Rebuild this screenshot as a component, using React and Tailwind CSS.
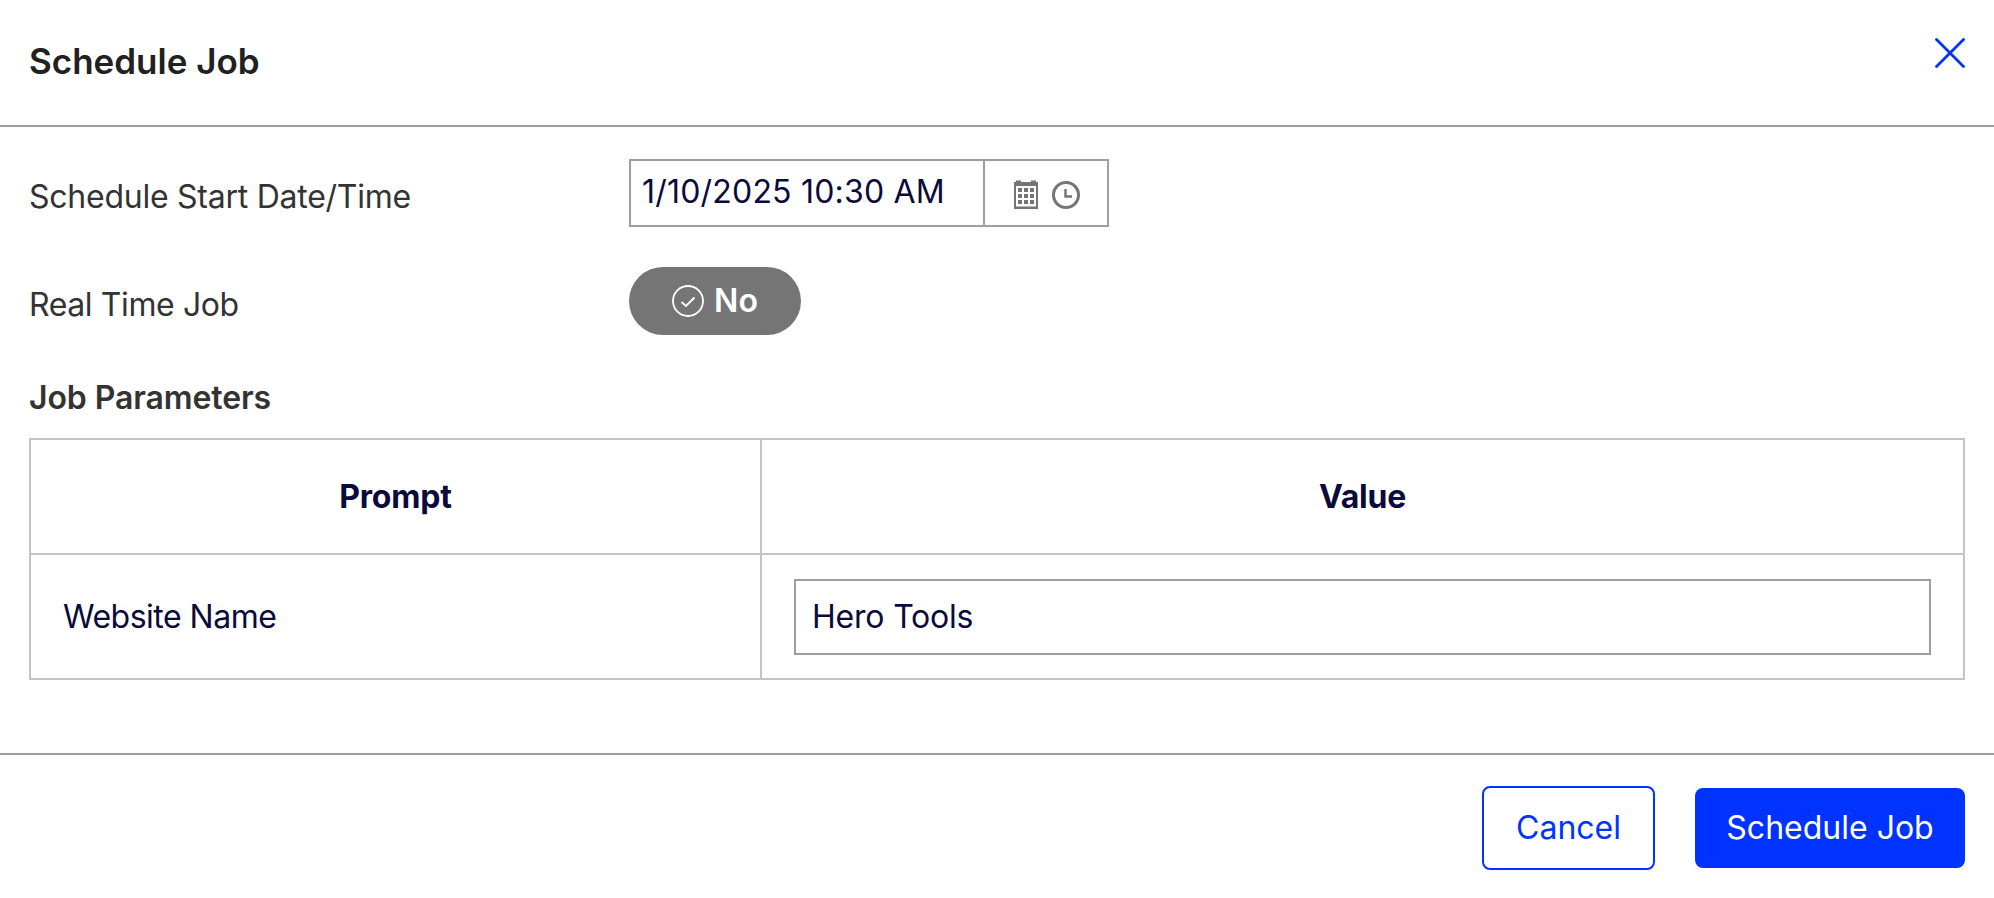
import React from 'react';

const CalendarIcon = () => (
  <svg width="24" height="29" viewBox="0 0 24 29" className="text-[#757575]">
    <path fill="currentColor" d="M0 2h2V0.5h5V2h10V0.5h5V2h2v27H0z" />
    <path fill="#fff" d="M2 6h20v20.5H2z" />
    <g fill="currentColor">
      <rect x="4" y="8" width="4" height="4" /><rect x="10" y="8" width="4" height="4" /><rect x="16" y="8" width="4" height="4" />
      <rect x="4" y="14" width="4" height="4" /><rect x="10" y="14" width="4" height="4" /><rect x="16" y="14" width="4" height="4" />
      <rect x="4" y="20" width="4" height="4" /><rect x="10" y="20" width="4" height="4" /><rect x="16" y="20" width="4" height="4" />
    </g>
  </svg>
);

const ClockIcon = () => (
  <svg width="28" height="28" viewBox="0 0 28 28" fill="none" stroke="#757575" className="mt-[1px]">
    <circle cx="14" cy="14" r="12.5" strokeWidth="3" />
    <path d="M13.5 8v7.5h6.5" strokeWidth="2.4" />
  </svg>
);

const CheckCircle = () => (
  <svg width="32" height="32" viewBox="0 0 32 32" fill="none" stroke="#fff">
    <circle cx="16" cy="16" r="15" strokeWidth="1.8" />
    <path d="M9.5 17l4.5 4l8.5-8.5" strokeWidth="1.8" />
  </svg>
);

const App = () => {
  return (
    <div className="w-[1994px] h-[898px] bg-white font-['Inter',sans-serif] overflow-hidden">
      <div className="h-[127px] border-b-2 border-[#9e9e9e] flex justify-between items-start pl-[29px] pr-[29px]">
        <h1 className="text-[35px] leading-[40px] font-semibold text-[#212121] mt-[41px]">Schedule Job</h1>
        <button className="mt-[38px] text-[#0033ff]">
          <svg width="30" height="30" viewBox="0 0 30 30" fill="none" stroke="currentColor" strokeWidth="2.8" strokeLinecap="round">
            <path d="M1.5 1.5l27 27M28.5 1.5l-27 27" />
          </svg>
        </button>
      </div>

      <div className="h-[628px] border-b-2 border-[#9e9e9e] pl-[29px] pr-[29px] pt-[32px]">
        <div className="flex items-start">
          <label className="w-[600px] text-[32px] leading-[40px] tracking-[-0.25px] text-[#333333] mt-[18px]">Schedule Start Date/Time</label>
          <div className="flex h-[68px] w-[480px] border-2 border-[#9e9e9e]">
            <div className="w-[354px] border-r-2 border-[#9e9e9e] pl-[11px] pt-[12px] text-[32px] leading-[38px] tracking-[0.2px] text-[#0a0a3c]">1/10/2025 10:30 AM</div>
            <div className="flex-1 flex items-center gap-[14px] pl-[29px] pt-[2px]">
              <CalendarIcon />
              <ClockIcon />
            </div>
          </div>
        </div>

        <div className="flex items-start mt-[40px]">
          <label className="w-[600px] text-[32px] leading-[40px] tracking-[-0.4px] text-[#333333] mt-[18px]">Real Time Job</label>
          <div className="flex items-center justify-center gap-[10px] w-[172px] h-[68px] rounded-[34px] bg-[#757575] text-white">
            <CheckCircle />
            <span className="text-[32px] leading-[40px] font-semibold">No</span>
          </div>
        </div>

        <h2 className="mt-[43px] text-[32px] leading-[40px] font-semibold tracking-[-0.1px] text-[#333333]">Job Parameters</h2>

        <table className="mt-[20px] w-[1936px] h-[240px] border-collapse table-fixed text-[#0a0a3c]">
          <colgroup>
            <col className="w-[731px]" />
            <col />
          </colgroup>
          <thead>
            <tr className="h-[115px]">
              <th className="border-2 border-[#c4c4c4] text-[32px] tracking-[-0.2px] font-bold">Prompt</th>
              <th className="border-2 border-[#c4c4c4] text-[32px] tracking-[-0.2px] font-bold">Value</th>
            </tr>
          </thead>
          <tbody>
            <tr className="h-[125px]">
              <td className="border-2 border-[#c4c4c4] pl-[32px] text-[32px] tracking-[-0.5px]">Website Name</td>
              <td className="border-2 border-[#c4c4c4] px-[32px]">
                <div className="h-[76px] border-2 border-[#9e9e9e] pl-[16px] flex items-center text-[32px] tracking-[-0.2px]">Hero Tools</div>
              </td>
            </tr>
          </tbody>
        </table>
      </div>

      <div className="flex justify-end items-center gap-[40px] pr-[29px] pt-[31px]">
        <button className="w-[173px] h-[84px] rounded-[8px] border-2 border-[#0033ff] text-[#0033ff] text-[32px]">Cancel</button>
        <button className="w-[270px] h-[80px] rounded-[8px] bg-[#0033ff] text-white text-[32px]">Schedule Job</button>
      </div>
    </div>
  );
};

export default App;
